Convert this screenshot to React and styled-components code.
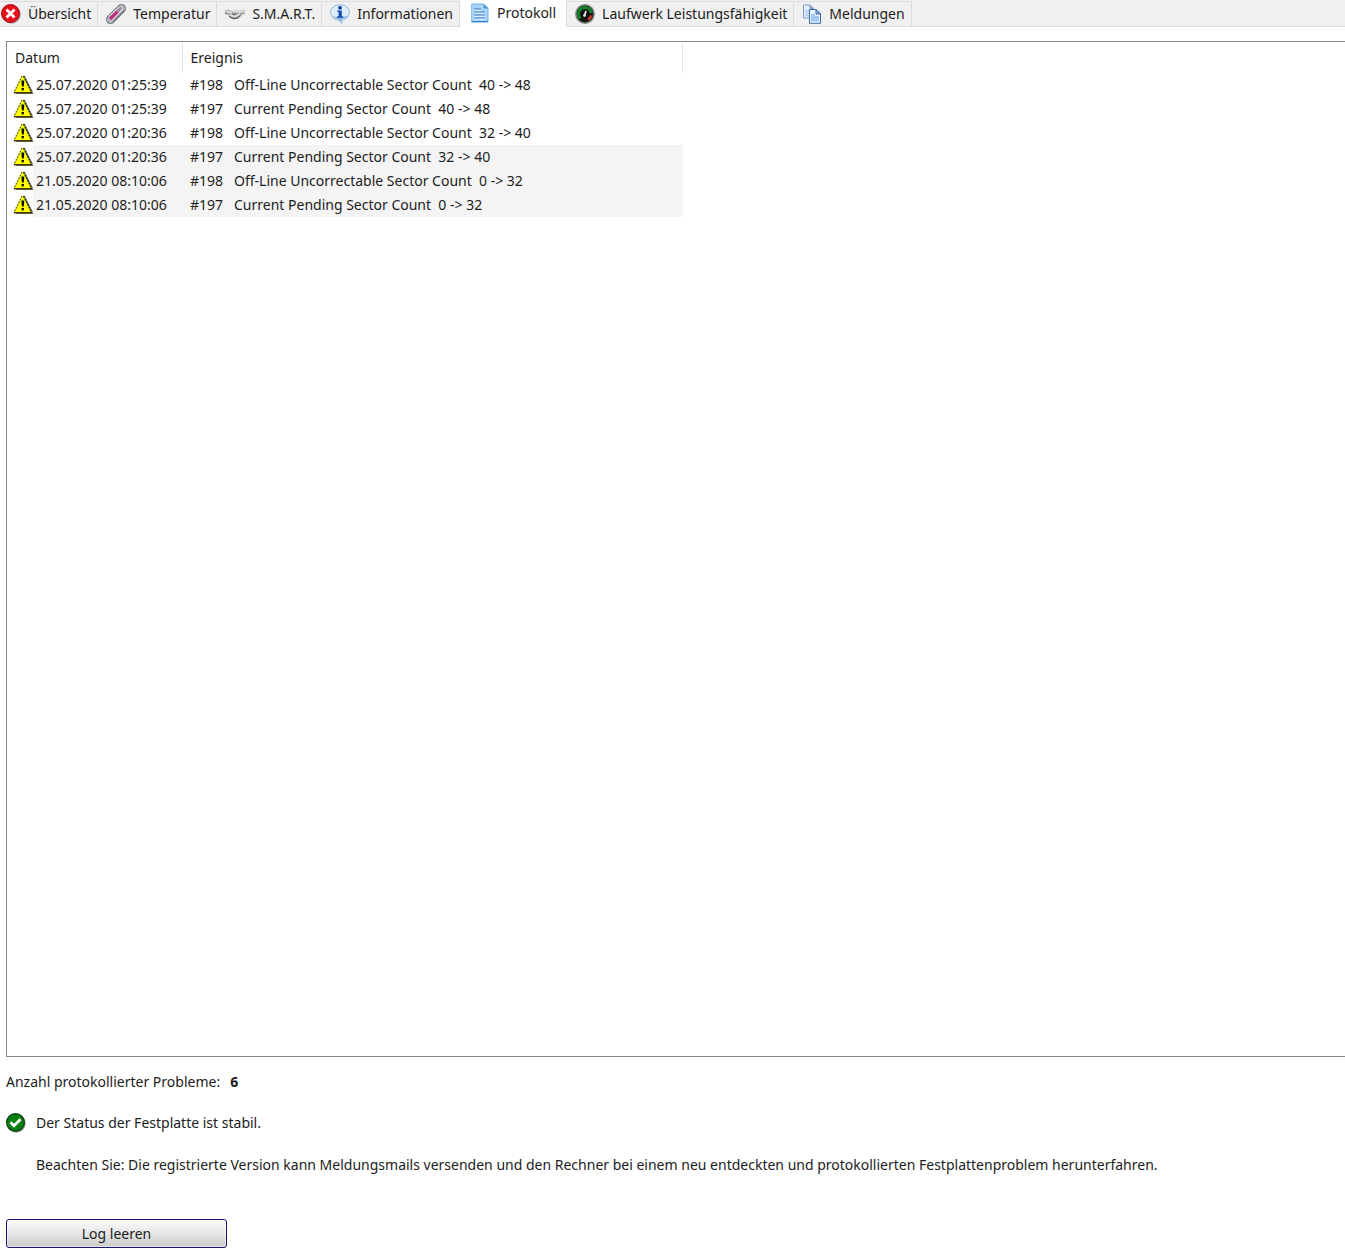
import React, { useState } from "react";
import styled, { createGlobalStyle } from "styled-components";

const GlobalStyle = createGlobalStyle`
  *, *::before, *::after { box-sizing: border-box; }
  body {
    margin: 0;
    background: #fff;
    color: #1c1c1c;
    font-family: "Noto Sans", "Open Sans", sans-serif;
    font-size: 14px;
    line-height: 20px;
  }
  button { font: inherit; color: inherit; }
`;

const Page = styled.div`
  display: flex;
  flex-direction: column;
  min-height: 100vh;
  overflow-x: hidden;
`;

const TabBar = styled.div`
  display: flex;
  align-items: flex-end;
  height: 27px;
  background: #f0f0f0;
  border-bottom: 1px solid #dcdcdc;
`;

const Tab = styled.button`
  display: flex;
  align-items: center;
  gap: 7px;
  flex: none;
  height: ${(p) => (p.$active ? "27px" : "25px")};
  margin: 0 0 ${(p) => (p.$active ? "-1px" : "0")};
  padding: ${(p) => (p.$active ? "0 10px 2px" : "0 6px 0 8px")};
  border: solid #dcdcdc;
  border-width: ${(p) => (p.$active ? "0 1px 0 0" : "1px 1px 0 0")};
  background: ${(p) => (p.$active ? "#fff" : "#f0f0f0")};
  white-space: nowrap;

  &:first-child { padding-left: 1px; }
`;

const Icon = styled.svg`
  display: block;
  flex: none;
  width: 20px;
  height: 20px;
`;

const LogPanel = styled.div`
  flex: 1;
  margin: 14px 0 0 6px;
  padding-top: 1px;
  border: solid #83878d;
  border-width: 1px 0 1px 1px;
`;

const LogTable = styled.table`
  border-collapse: collapse;
  table-layout: fixed;
  width: 676px;

  th, td {
    padding: 0 0 0 8px;
    text-align: left;
    font-weight: 400;
    white-space: pre;
  }
  th {
    height: 30px;
    border-right: 1px solid #e2e2e2;
  }
`;

const DateColumn = styled.col`
  width: 175px;
`;

const LogRow = styled.tr`
  height: 24px;
  background: ${(p) =>
    p.$shaded ? "linear-gradient(90deg, #fff 26px, #f4f4f4 26px)" : "none"};
`;

const DateCell = styled.div`
  display: flex;
  align-items: center;
  gap: 3px;
  margin-left: -2px;
`;

const Footer = styled.div`
  display: flex;
  flex-direction: column;
  align-items: flex-start;
  padding: 15px 6px 12px;
`;

const Count = styled.p`
  display: flex;
  gap: 10px;
  margin: 0 0 21px;
`;

const Status = styled.p`
  display: flex;
  align-items: center;
  gap: 10px;
  margin: 0 0 22px;
`;

const Note = styled.p`
  margin: 0 0 44px;
  padding-left: 30px;
`;

const ClearButton = styled.button`
  width: 221px;
  height: 29px;
  padding: 0;
  border: 1px solid #14146e;
  border-radius: 3px;
  background: linear-gradient(#fbfbfb, #e6e6e6 50%, #cacaca);
  box-shadow: inset 0 0 0 1px #ffffff80;
`;

const ErrorIcon = () => (
  <Icon viewBox="0 0 20 20" aria-hidden="true">
    <circle cx="10.5" cy="10.5" r="9.3" fill="#777" opacity=".6" />
    <circle cx="9.5" cy="9.5" r="9" fill="#e3101a" stroke="#a80d12" strokeWidth="1" />
    <path d="M5.500 5.500l8 8M13.500 5.500l-8 8" stroke="#fff" strokeWidth="2.800" />
  </Icon>
);

const ThermometerIcon = () => (
  <Icon viewBox="0 0 20 20" aria-hidden="true">
    <path d="M4.500 15.500L15.500 4.500" stroke="#6a6d74" strokeWidth="9" strokeLinecap="round" />
    <path d="M4.500 15.500L15.500 4.500" stroke="#b5b8be" strokeWidth="7" strokeLinecap="round" />
    <path d="M7 17.500L18 6.500" stroke="#7b7f86" strokeWidth="1.600" />
    <path d="M5.500 16.500L16.800 5" stroke="#e4e6ea" strokeWidth="1.200" />
    <path d="M4 15L12 7" stroke="#c0307f" strokeWidth="3.600" />
    <path d="M11 8L15 4" stroke="#a58a9b" strokeWidth="2.600" />
    <path d="M3 12.500L13 2.800" stroke="#eef0f3" strokeWidth="1" />
  </Icon>
);

const HandshakeIcon = () => (
  <Icon viewBox="0 0 20 20" aria-hidden="true">
    <path d="M0 6.500l3-1 4 1.800 4-1.300 4 1 4.500-1.500.3 4.500-3 1-4 3.500-4 .8-4-2-2.300-3L0 9.500z" fill="#adadad" />
    <path d="M1 7.500l3 .5 3 1M8 8l3-1 4 1.500 4-1.500M5 11l4 1.500 4-1 3-2" stroke="#e6e6e6" strokeWidth="1.500" fill="none" />
    <path d="M4 12.500l4.500 2.200 3.500-.5 3.500-2.700" stroke="#606060" strokeWidth="1.300" fill="none" />
    <path d="M7 9.500l2 1.200 2-1.500M15.500 9l1 1.500M0 9l2.500.8" stroke="#707070" strokeWidth="1.200" fill="none" />
  </Icon>
);

const InfoIcon = () => (
  <Icon viewBox="0 0 20 20" aria-hidden="true">
    <path d="M10 .8C4.500.8.700 4 .7 8.600c0 4 3 6.800 7.500 7.400l3.800 3.500V16c4.500-.6 7.300-3.400 7.300-7.400C19.300 4 15.500.8 10 .8z" fill="#dceefb" stroke="#9fb8ce" />
    <path d="M2 11.500c2 2.500 4.500 3.200 6.300 3.500l3 3V15c3.700-.4 6-1.500 7-3.800-4 2.600-12 3-16.300.3z" fill="#7bb0e1" />
    <circle cx="10" cy="3.800" r="1.900" fill="#123b9e" />
    <path d="M7.300 6.500h4.500v5.700h1.400v1.600H7.100v-1.600h1.500V8.100H7.300z" fill="#174bb0" />
  </Icon>
);

const DocumentIcon = () => (
  <Icon viewBox="0 0 20 20" aria-hidden="true">
    <path d="M1.500 1h12L18 5v14H1.500z" fill="#a9d4fb" />
    <path d="M1.500 1h12L18 5v14" fill="none" stroke="#6fb0ea" />
    <path d="M1.500 1v17.500" stroke="#8cc3f3" />
    <path d="M1.500 18.700H18" stroke="#3b86d0" strokeWidth="1.500" />
    <path d="M13.500 1v4.500H18z" fill="#4e91d8" />
    <path d="M4 6h7M4 9h11M4 12h11M4 15h11" stroke="#4373b4" strokeWidth="1.200" />
    <path d="M4 7.300h7M4 10.300h11M4 13.300h11M4 16.300h11" stroke="#e6f5ff" />
  </Icon>
);

const GaugeIcon = () => (
  <Icon viewBox="0 0 20 20" aria-hidden="true">
    <circle cx="10" cy="10" r="9.200" fill="#161a16" stroke="#868986" strokeWidth="1.500" />
    <path d="M5.300 14.500A6.500 6.500 0 1 1 16.400 9" fill="none" stroke="#12812a" strokeWidth="3" />
    <path d="M16.300 11.500A6.500 6.500 0 0 1 13 15.500" fill="none" stroke="#d4351f" strokeWidth="2.600" />
    <circle cx="10" cy="10" r="4" fill="#101310" />
    <path d="M9.300 12l1.700-5" stroke="#fff" strokeWidth="1.600" />
    <circle cx="9.500" cy="11.500" r="1.400" fill="#d6ded6" />
  </Icon>
);

const CopyIcon = () => (
  <Icon viewBox="0 0 20 20" aria-hidden="true">
    <path d="M1.500 1H8l3.500 3.500V14h-10z" fill="#e9f2fd" stroke="#7f96c2" />
    <path d="M8 1v3.500h3.500z" fill="#9db8df" stroke="#7f96c2" />
    <path d="M3 5.500h4v7H3z" fill="#bdd8f6" />
    <path d="M7.500 5.500H14L18.500 10v9.300h-11z" fill="#e7f3ff" stroke="#4668a9" />
    <path d="M14 5.500V10h4.500z" fill="#8eb1df" stroke="#4668a9" />
    <path d="M9 10h4v2h4v5.500H9z" fill="#a0c8f3" />
  </Icon>
);

const WarningIcon = () => (
  <Icon viewBox="0 0 20 20" aria-hidden="true">
    <path d="M9 1h3l8 16v2H3z" fill="#7d7d70" />
    <path d="M9 1h1.500L18 17.500H1z" fill="#ffff00" />
    <path d="M9 1L1 17.500" stroke="#77770b" strokeWidth="1.300" strokeDasharray="2 1" />
    <path d="M10.500 1L18.500 17" stroke="#222" strokeWidth="1.300" strokeDasharray="2 1" />
    <path d="M1 17.800h18" stroke="#33330a" strokeWidth="1.400" />
    <path d="M8.300 5.500h3l-.5 6h-2z" fill="#111" />
    <rect x="8.500" y="13" width="2.500" height="2.300" fill="#111" />
  </Icon>
);

const SuccessIcon = () => (
  <Icon viewBox="0 0 20 20" aria-hidden="true">
    <circle cx="10.500" cy="10.500" r="9.300" fill="#777" opacity=".6" />
    <circle cx="9.500" cy="9.500" r="8.900" fill="#078010" stroke="#0c3e10" strokeWidth="1.200" />
    <path d="M4.500 9.200l3.500 3.500 6.500-6.500" fill="none" stroke="#fff" strokeWidth="2.800" />
  </Icon>
);

const tabs = [
  ["Übersicht", ErrorIcon],
  ["Temperatur", ThermometerIcon],
  ["S.M.A.R.T.", HandshakeIcon],
  ["Informationen", InfoIcon],
  ["Protokoll", DocumentIcon],
  ["Laufwerk Leistungsfähigkeit", GaugeIcon],
  ["Meldungen", CopyIcon],
];

const entries = [
  ["25.07.2020 01:25:39", "#198   Off-Line Uncorrectable Sector Count  40 -> 48"],
  ["25.07.2020 01:25:39", "#197   Current Pending Sector Count  40 -> 48"],
  ["25.07.2020 01:20:36", "#198   Off-Line Uncorrectable Sector Count  32 -> 40"],
  ["25.07.2020 01:20:36", "#197   Current Pending Sector Count  32 -> 40", true],
  ["21.05.2020 08:10:06", "#198   Off-Line Uncorrectable Sector Count  0 -> 32", true],
  ["21.05.2020 08:10:06", "#197   Current Pending Sector Count  0 -> 32", true],
];

export default function App() {
  const [active, setActive] = useState("Protokoll");
  return (
    <Page>
      <GlobalStyle />
      <TabBar role="tablist">
        {tabs.map(([label, TabIcon]) => (
          <Tab
            key={label}
            type="button"
            role="tab"
            aria-selected={active === label}
            $active={active === label}
            onClick={() => setActive(label)}
          >
            <TabIcon />
            {label}
          </Tab>
        ))}
      </TabBar>
      <LogPanel>
        <LogTable>
          <colgroup>
            <DateColumn />
            <col />
          </colgroup>
          <thead>
            <tr>
              <th scope="col">Datum</th>
              <th scope="col">Ereignis</th>
            </tr>
          </thead>
          <tbody>
            {entries.map(([date, event, shaded]) => (
              <LogRow key={date + event} $shaded={shaded}>
                <td>
                  <DateCell>
                    <WarningIcon />
                    {date}
                  </DateCell>
                </td>
                <td>{event}</td>
              </LogRow>
            ))}
          </tbody>
        </LogTable>
      </LogPanel>
      <Footer>
        <Count>
          Anzahl protokollierter Probleme: <strong>6</strong>
        </Count>
        <Status>
          <SuccessIcon />
          Der Status der Festplatte ist stabil.
        </Status>
        <Note>
          Beachten Sie: Die registrierte Version kann Meldungsmails versenden und den Rechner bei
          einem neu entdeckten und protokollierten Festplattenproblem herunterfahren.
        </Note>
        <ClearButton type="button">Log leeren</ClearButton>
      </Footer>
    </Page>
  );
}
